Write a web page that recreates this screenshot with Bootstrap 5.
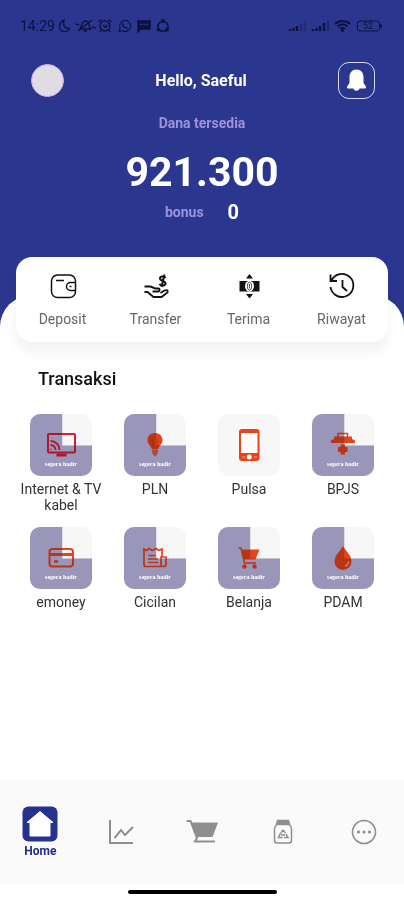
<!DOCTYPE html>
<html lang="id">
<head>
<meta charset="utf-8">
<meta name="viewport" content="width=device-width, initial-scale=1">
<title>Beranda</title>
<link href="https://cdn.jsdelivr.net/npm/bootstrap@5.3.0/dist/css/bootstrap.min.css" rel="stylesheet">
<style>
  body { font-family: Roboto, "Liberation Sans", sans-serif; font-size: 14px; line-height: 16px; color: #333; background: #fff; }
  a, a:hover { color: inherit; text-decoration: none; }
  svg { display: block; flex: none; }
  .hero { background: #2b378f; color: #fff; }
  .statusbar { color: #0d123f; padding: 18px 20px 0; height: 52px; font-size: 14px; }
  .greeting { padding: 10px 29px 0 31px; }
  .avatar { width: 33px; height: 33px; background: #dedde4; border: 1px solid #d9a9ec; }
  .bell { width: 37px; height: 37px; border: 1px solid #d5d8f2; border-radius: 11px; }
  .hello { font-size: 16px; line-height: 20px; }
  .soft { color: #9c93dc; }
  .balance { font-size: 41px; line-height: 48px; margin-top: 17px; }
  .bonus { font-size: 20px; line-height: 24px; }
  .sheet { background: #fff; border-radius: 32px 32px 0 0; height: 32px; margin-top: 71px; }
  .quick { background: #fff; border-radius: 16px; margin: -70px 16px 0; padding: 15px 0; box-shadow: 0 10px 12px rgba(0, 0, 0, .05); }
  .quick a { color: #666; row-gap: 11px; }
  .section-title { font-size: 18px; line-height: 22px; color: #111; margin: 26px 38px 24px; }
  .services { padding: 0 14px; row-gap: 14px; }
  .tile { width: 62px; height: 62px; border-radius: 10px; background: #f7f7f7; color: #e8431a; }
  .tile svg { position: relative; }
  .tile.tv { color: #d81f30; }
  .tile.soon::before, .tile.soon::after { content: ""; position: absolute; inset: 0; clip-path: polygon(0 0, 52% 0, 52% 51%, 100% 51%, 100% 100%, 0 100%); }
  .tile.soon::before { background: #c5bbda; }
  .tile.soon::after { background: #c8ccda; mix-blend-mode: multiply; }
  .soon-text { bottom: 7px; font: bold 6px/10px "Liberation Serif", serif; color: #fff; z-index: 1; }
  .service-label { margin-top: 5px; }
  .tabs { background: #fafafa; height: 104px; color: #8e8e8e; }
  .tab-home { color: #202b8c; font-size: 12px; line-height: 16px; }
  .tab-home span { margin-top: 1px; }
  .handle { width: 149px; height: 4px; border-radius: 2px; background: #000; margin: 6px auto; }
</style>
</head>
<body>
<div class="min-vh-100 d-flex flex-column">
  <header class="hero">
    <div class="statusbar d-flex justify-content-between align-items-start">
      <div class="d-flex align-items-center gap-1">
        <span>14:29</span>
        <svg width="110" height="16" viewBox="0 0 110 16" fill="none" stroke="currentColor" stroke-width="1.4" aria-hidden="true">
          <path d="M5 2C-1 5-1 13 5 13.500C8 14 10 12 10.500 10.500C6 11 3.500 7 5 2Z"/>
          <path d="M19 13L33 2M17 6l3 1M33 9l4 1M21 11c2-2 1-7 5-8 3 0 4 2 4 4 0 2 1 3 2 4ZM25 13h3"/>
          <circle cx="46" cy="8" r="5"/><path d="M39.500 4l3-2.500M49.500 1.500l3 2.500M44 7l2 2 3-2M42 12l-1 2M50 12l1 2"/>
          <path d="M60 13.500l1-3.500a5.500 5.500 0 1 1 2 2.500Z" stroke-width="1.100"/><path d="M63.500 5c0 3 2 5 5 5"/>
          <path d="M79 3h12v8h-9l-3 3Z" fill="currentColor"/><path d="M81 6.500h8" stroke="#2b378f" stroke-dasharray="2 1"/>
          <path d="M99 10a5.500 5.500 0 0 1 3-6M106 4a5.500 5.500 0 0 1 3 6M101 13h6"/>
          <g fill="currentColor" stroke="none"><circle cx="104" cy="3" r="2"/><circle cx="99.500" cy="11.500" r="2"/><circle cx="108" cy="11.500" r="2"/></g>
        </svg>
      </div>
      <svg width="96" height="16" viewBox="0 0 96 16" fill="none" stroke="currentColor" aria-hidden="true">
        <g stroke-width="2.400"><path d="M2 13v-2M5.500 13v-3M9 13V8"/><path d="M13 13V6M17 13V3" opacity=".3"/><path d="M25 13v-2M28.500 13v-3M32 13V8M36 13V5"/><path d="M40 13V3" opacity=".4"/></g>
        <path d="M47 6c4-4 11-4 15 0M49.500 8.500c3-3 7-3 10 0M52 11c2-1.500 3-1.500 5 0" stroke-width="2"/><circle cx="54.500" cy="12.500" r="1.500" fill="currentColor" stroke="none"/>
        <rect x="69.500" y="3" width="22" height="10" rx="2.500"/><path d="M93 6.500v3" stroke-width="2"/>
        <text x="75" y="11" font-size="9" fill="currentColor" stroke="none">52</text>
      </svg>
    </div>
    <div class="greeting d-flex align-items-center justify-content-between">
      <div class="avatar rounded-circle"></div>
      <h1 class="hello fw-bold m-0">Hello, Saeful</h1>
      <button type="button" class="bell btn p-0 d-flex align-items-center justify-content-center text-white" aria-label="Notifikasi">
        <svg width="21" height="23" viewBox="0 0 21 23" fill="currentColor"><path d="M10.500 0.500C15 .5 17.500 4 17.500 8v5.500c0 2 2.500 2.500 2.500 5 0 .8-.7 1-1.500 1h-5c-.5 3-5.500 3-6 0h-5c-.8 0-1.500-.2-1.500-1 0-2.500 2.500-3 2.500-5V8C3.500 4 6 .5 10.500.5Z"/></svg>
      </button>
    </div>
    <div class="text-center pt-3">
      <div class="soft fw-bold">Dana tersedia</div>
      <div class="balance fw-bold">921.300</div>
      <div class="d-flex justify-content-center align-items-center gap-4 pt-1">
        <span class="soft fw-bold">bonus</span><span class="bonus fw-bold">0</span>
      </div>
    </div>
    <div class="sheet"></div>
  </header>

  <main class="flex-grow-1">
    <nav class="quick d-flex position-relative text-center" aria-label="Aksi cepat">
      <a href="#" class="col-3 d-flex flex-column align-items-center">
        <svg width="28" height="28" viewBox="0 0 28 28" fill="none" stroke="#111" stroke-width="1.500"><rect x="2.500" y="3" width="24" height="22.500" rx="6"/><path d="M7 8.500h8M26 10.500h-4.500a4 4 0 0 0 0 8H26M20.500 14.500h2"/></svg>
        Deposit</a>
      <a href="#" class="col-3 d-flex flex-column align-items-center">
        <svg width="28" height="28" viewBox="0 0 28 28" fill="none" stroke="#111" stroke-width="1.800"><path d="M2.500 14.500h5c3 0 4 2 6 2h3c1.500 0 1.500 3 0 3h-6M2.500 20h3l6 5h8l6-4.500c1-2-1-3-3-2l-4 2.500"/><path d="M23.500 6c-1-2-5.500-2-5.500.5 0 3 5.500 2 5.500 5 0 2.500-5 2.500-6 .5M22.500 2.500L19.500 15" stroke-width="2"/></svg>
        Transfer</a>
      <a href="#" class="col-3 d-flex flex-column align-items-center">
        <svg width="28" height="28" viewBox="0 0 28 28" fill="#111"><path d="M4.500 9h20v10.500h-20Z"/><ellipse cx="14.500" cy="14.200" rx="4.500" ry="5.500" fill="#fff"/><ellipse cx="14.500" cy="14.200" rx="2.200" ry="4" fill="none" stroke="#555"/><path d="M14.500 2l3.500 4.500h-7ZM14.500 26.500L11 22h7Z"/><path d="M14.500 12v4.500" stroke="#555"/></svg>
        Terima</a>
      <a href="#" class="col-3 d-flex flex-column align-items-center">
        <svg width="28" height="28" viewBox="0 0 28 28" fill="none" stroke="#111" stroke-width="1.800"><path d="M2.500 2.500V9H9M3.500 8.500A11.500 11.500 0 1 1 2.500 15M14.500 8v7l4.500 4"/></svg>
        Riwayat</a>
    </nav>

    <h2 class="section-title fw-medium">Transaksi</h2>

    <div class="services d-flex flex-wrap text-center">
      <a href="#" class="col-3 d-flex flex-column align-items-center">
        <div class="tile tv soon position-relative overflow-hidden d-flex align-items-center justify-content-center">
          <svg width="32" height="32" viewBox="0 0 32 32" fill="none" stroke="currentColor" stroke-width="2"><rect x="3" y="5" width="27" height="18.500" rx="1"/><path d="M5.500 20.500h1M5.500 16a5 5 0 0 1 5 5M5.500 12a9 9 0 0 1 9 9"/><path d="M11.500 26h10" stroke-width="3"/></svg>
          <small class="soon-text position-absolute">segera hadir</small></div>
        <span class="service-label">Internet &amp; TV kabel</span></a>
      <a href="#" class="col-3 d-flex flex-column align-items-center">
        <div class="tile soon position-relative overflow-hidden d-flex align-items-center justify-content-center">
          <svg width="32" height="32" viewBox="0 0 32 32" fill="currentColor"><path d="M16 4c5 0 7.500 3.500 7.500 7 0 4-3.500 6-4.500 9.500h-6c-1-3.500-4.500-5.500-4.500-9.500C8.500 7.500 11 4 16 4Z"/><path d="M13 21h6l-.5 4-2.500 2.500-2.500-2.500Z" opacity=".8"/><path d="M12.500 9l2 10M19.500 9l-2 10" stroke="#c23a16" fill="none"/></svg>
          <small class="soon-text position-absolute">segera hadir</small></div>
        <span class="service-label">PLN</span></a>
      <a href="#" class="col-3 d-flex flex-column align-items-center">
        <div class="tile d-flex align-items-center justify-content-center">
          <svg width="34" height="34" viewBox="0 0 34 34"><rect x="7" y="1" width="20.500" height="32" rx="3" fill="currentColor"/><path d="M9 5h16.500v20H9Z" fill="#fff"/><circle cx="17.200" cy="29" r="2.500" fill="#fff"/><path d="M10 29h3M22 29h3" stroke="#f7a78e"/></svg></div>
        <span class="service-label">Pulsa</span></a>
      <a href="#" class="col-3 d-flex flex-column align-items-center">
        <div class="tile soon position-relative overflow-hidden d-flex align-items-center justify-content-center">
          <svg width="32" height="32" viewBox="0 0 32 32" fill="currentColor"><path d="M11 8V4.500h9.500V8" fill="none" stroke="currentColor" stroke-width="1.500"/><path d="M7 7.500h18V10l3 1.500V14H4v-2.500L7 10Z"/><path d="M13.500 15.500h4.500V18h2.500v5H18v2.500h-4.500V23H11v-5h2.500Z"/></svg>
          <small class="soon-text position-absolute">segera hadir</small></div>
        <span class="service-label">BPJS</span></a>
      <a href="#" class="col-3 d-flex flex-column align-items-center">
        <div class="tile soon position-relative overflow-hidden d-flex align-items-center justify-content-center">
          <svg width="32" height="32" viewBox="0 0 32 32" fill="none" stroke="currentColor" stroke-width="2"><rect x="4.500" y="7" width="23.500" height="17.500" rx="3"/><path d="M5 12.500h22.500" stroke-width="3"/><path d="M9 19.500h4" stroke-width="2.500"/></svg>
          <small class="soon-text position-absolute">segera hadir</small></div>
        <span class="service-label">emoney</span></a>
      <a href="#" class="col-3 d-flex flex-column align-items-center">
        <div class="tile soon position-relative overflow-hidden d-flex align-items-center justify-content-center">
          <svg width="32" height="32" viewBox="0 0 32 32" fill="none" stroke="currentColor" stroke-width="1.700"><path d="M23 15V7l-3 1.500L17 6.500 13.500 8.500 10 6.500 7.500 8.500 5 7v15.500c0 1 1 2 2 2h17.500c1.500 0 2.500-1 2.500-2V15h-5v7.500c0 1 1 2 2 2M9.500 13.500h7M9 17h10M9 20.500h10"/></svg>
          <small class="soon-text position-absolute">segera hadir</small></div>
        <span class="service-label">Cicilan</span></a>
      <a href="#" class="col-3 d-flex flex-column align-items-center">
        <div class="tile soon position-relative overflow-hidden d-flex align-items-center justify-content-center">
          <svg width="32" height="32" viewBox="0 0 32 32" fill="currentColor"><path d="M8 7.500h18.500l-4 10H11Z"/><path d="M5.500 6H8l3.500 15h11.500" fill="none" stroke="currentColor" stroke-width="1.600"/><circle cx="11.500" cy="24.500" r="2.200"/><circle cx="21.500" cy="24.500" r="2.200"/></svg>
          <small class="soon-text position-absolute">segera hadir</small></div>
        <span class="service-label">Belanja</span></a>
      <a href="#" class="col-3 d-flex flex-column align-items-center">
        <div class="tile soon position-relative overflow-hidden d-flex align-items-center justify-content-center">
          <svg width="32" height="32" viewBox="0 0 32 32" fill="currentColor"><path d="M16 4c2.500 5 8.500 9 8.500 15.500a8.500 8.500 0 0 1-17 0C7.500 13 13.500 9 16 4Z"/><path d="M21.500 19.500c0 2.500-1.500 4-3.500 4.500" fill="none" stroke="#f0b8ac" stroke-width="1.200"/></svg>
          <small class="soon-text position-absolute">segera hadir</small></div>
        <span class="service-label">PDAM</span></a>
    </div>
  </main>

  <footer>
    <nav class="tabs d-flex align-items-center" aria-label="Menu utama">
      <a href="#" class="tab-home col d-flex flex-column align-items-center fw-bold" aria-current="page">
        <svg width="36" height="36" viewBox="0 0 36 36"><rect x=".5" y=".5" width="35" height="35" rx="6" fill="#26328f"/><path d="M18 5.500l13 11H28V30H8V16.500H5Z" fill="#fff" stroke="#fff" stroke-linejoin="round"/></svg>
        <span>Home</span></a>
      <a href="#" class="col d-flex justify-content-center" aria-label="Statistik">
        <svg width="28" height="28" viewBox="0 0 28 28" fill="none" stroke="#8e8e8e" stroke-width="2"><path d="M3 2v23h23M7.500 20l6.500-8 4 5 8-8"/></svg></a>
      <a href="#" class="col d-flex justify-content-center" aria-label="Belanja">
        <svg width="34" height="28" viewBox="0 0 34 28" fill="#8e8e8e"><path d="M6 4.500h27L27.500 19H11Z"/><path d="M1.500 3h4L12 20l-2 3.500h20" fill="none" stroke="#8e8e8e" stroke-width="2"/></svg></a>
      <a href="#" class="col d-flex justify-content-center" aria-label="Produk">
        <svg width="28" height="28" viewBox="0 0 28 28" fill="none" stroke="#8e8e8e" stroke-width="1.500"><path d="M8.500 2.500h11l1 4h-13Z" fill="#8e8e8e"/><path d="M7.500 7C6 8 5.500 9 5.500 11v11.500c0 1.500 1 2.500 2.500 2.500h12c1.500 0 2.500-1 2.500-2.500V11c0-2-.5-3-2-4"/><path d="M14 12l2.500 3M11.500 15L9.500 19.500h4M15 19.500h4L17 16M12 15l2-3M12 17h4"/></svg></a>
      <a href="#" class="col d-flex justify-content-center" aria-label="Lainnya">
        <svg width="28" height="28" viewBox="0 0 28 28" fill="#8e8e8e"><circle cx="14" cy="14" r="11.500" fill="none" stroke="#8e8e8e" stroke-width="1.600"/><circle cx="8.500" cy="14" r="1.600"/><circle cx="14" cy="14" r="1.600"/><circle cx="19.500" cy="14" r="1.600"/></svg></a>
    </nav>
    <div class="handle"></div>
  </footer>
</div>
<script src="https://cdn.jsdelivr.net/npm/bootstrap@5.3.0/dist/js/bootstrap.bundle.min.js"></script>
</body>
</html>
